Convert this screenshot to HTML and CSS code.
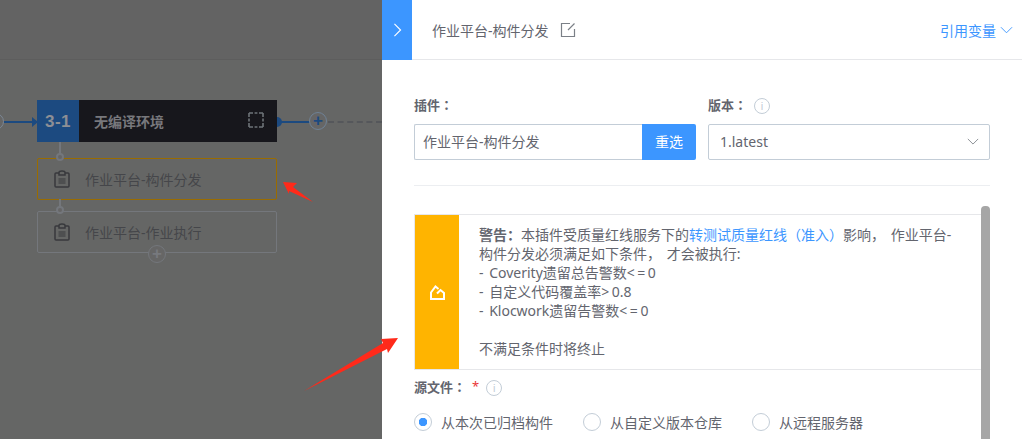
FILE: index.html
```html
<!DOCTYPE html>
<html lang="zh-CN">
<head>
    <meta charset="UTF-8">
    <title>作业平台-构件分发</title>
    <link rel="stylesheet" href="styles.css">
</head>
<body>
    <div class="page">
        <div class="canvas">
            <div class="topbar"></div>
            <div class="line line-in"></div>
            <div class="start-dot"></div>
            <div class="arrow-in"></div>
            <div class="stage">
                <div class="stage-num">3-1</div>
                <div class="stage-name">无编译环境</div>
                <svg class="stage-check" viewBox="0 0 16 16" width="16" height="16"><rect x="1" y="1" width="14" height="14" fill="none" stroke="#6e7478" stroke-width="1.6" stroke-dasharray="4 1.6 2.8 1.6 4 0"/></svg>
            </div>
            <div class="end-dot"></div>
            <div class="line line-out"></div>
            <div class="add-btn">+</div>
            <div class="line-dash"></div>
            <div class="stem stem-one"></div>
            <div class="knob knob-one"></div>
            <div class="atom atom-active">
                <svg class="atom-icon" viewBox="0 0 16 18" width="16" height="18"><use href="#clip"></use></svg>
                <span>作业平台-构件分发</span>
            </div>
            <div class="stem stem-two"></div>
            <div class="knob knob-two"></div>
            <div class="atom atom-next">
                <svg class="atom-icon" viewBox="0 0 16 18" width="16" height="18"><use href="#clip"></use></svg>
                <span>作业平台-作业执行</span>
            </div>
            <div class="add-small">+</div>
        </div>

        <div class="panel">
            <div class="panel-head">
                <div class="toggle">
                    <svg viewBox="0 0 10 16" width="9" height="14"><path d="M1.5 1 L8.5 8 L1.5 15" fill="none" stroke="#fff" stroke-width="1.3"/></svg>
                </div>
                <div class="panel-title">作业平台-构件分发</div>
                <svg class="edit-icon" viewBox="0 0 16 16" width="16" height="16"><path d="M14.5 7 V14.5 H1.5 V1.5 H10 M14.5 1.5 L8 8" fill="none" stroke="#7b8087" stroke-width="1.2"/></svg>
                <div class="var-link">引用变量
                    <svg viewBox="0 0 14 8" width="13" height="8"><path d="M1 1 L7 7 L13 1" fill="none" stroke="#3c96ff" stroke-width="1"/></svg>
                </div>
            </div>

            <div class="panel-body">
                <div class="field-row">
                    <div class="field field-plugin">
                        <div class="field-label">插件<span class="cn-mark">：</span></div>
                        <div class="plugin-input">
                            <div class="plugin-value">作业平台-构件分发</div>
                            <div class="plugin-btn">重选</div>
                        </div>
                    </div>
                    <div class="field field-version">
                        <div class="field-label">版本<span class="cn-mark">：</span><span class="info">i</span></div>
                        <div class="version-select">
                            <span>1.latest</span>
                            <svg viewBox="0 0 14 8" width="12" height="7"><path d="M1 1 L7 7 L13 1" fill="none" stroke="#7b8087" stroke-width="1"/></svg>
                        </div>
                    </div>
                </div>
                <div class="divider"></div>

                <div class="scroll-area">
                    <div class="warning">
                        <div class="warning-side">
                            <svg viewBox="0 0 15 15" width="15" height="15"><path d="M7 8.5 L10.5 5 L14 8 V14 H1 V7.5 L5.5 1.5 L8.5 4" fill="none" stroke="#fff" stroke-width="2"/></svg>
                        </div>
                        <div class="warning-text">
                            <p><b>警告<span class="cn-mark">：</span></b>本插件受质量红线服务下的<a>转测试质量红线<span class="cn-mark">（</span>准入<span class="cn-mark">）</span></a>影响， 作业平台-构件分发必须满足如下条件， 才会被执行:</p>
                            <p>- Coverity遗留总告警数<span class="op">&lt;=</span>0</p>
                            <p>- 自定义代码覆盖率<span class="op">&gt;</span>0.8</p>
                            <p>- Klocwork遗留告警数<span class="op">&lt;=</span>0</p>
                            <p class="gap">不满足条件时将终止</p>
                        </div>
                    </div>
                    <div class="field-label source-label">源文件<span class="cn-mark">：</span><span class="star">*</span><span class="info">i</span></div>
                    <div class="radio-row">
                        <label class="radio radio-on"><span class="radio-dot"></span>从本次已归档构件</label>
                        <label class="radio"><span class="radio-dot"></span>从自定义版本仓库</label>
                        <label class="radio"><span class="radio-dot"></span>从远程服务器</label>
                    </div>
                    <div class="scrollbar"></div>
                </div>
            </div>
        </div>

        <svg class="red-arrow arrow-one" viewBox="0 0 32 24" width="32" height="24"><polygon points="0,3 14,4 10,8 30,23 6,12 6,15" fill="#ff2a1a"/></svg>
        <svg class="red-arrow arrow-two" viewBox="0 0 98 56" width="98" height="56"><polygon points="95,1 78,2 80,6 1,54 84,12 85,16" fill="#ff2a1a"/></svg>
    </div>

    <svg class="defs" width="0" height="0">
        <symbol id="clip" viewBox="0 0 16 18">
            <path d="M5 3 H2 Q1 3 1 4 V16 Q1 17 2 17 H14 Q15 17 15 16 V4 Q15 3 14 3 H11 M5 5 V2.5 Q5 1 8 1 Q11 1 11 2.5 V5 Z" fill="none" stroke="#38393d" stroke-width="1.5"/>
            <path d="M4.5 9 H11.5 M4.5 11 H11.5 M4.5 13 H11.5" stroke="#38393d" stroke-width="1.2"/>
        </symbol>
    </svg>
</body>
</html>
```

FILE: styles.css
```css
* {
    box-sizing: border-box;
}
html, body {
    margin: 0;
    height: 100%;
    overflow: hidden;
}
body {
    font-family: "Noto Sans", "Noto Sans CJK SC", sans-serif;
    font-size: 14px;
    color: #63656e;
    background-color: #666;
}
.page {
    position: relative;
    display: flex;
    width: 1022px;
    height: 439px;
    overflow: hidden;
}
.defs {
    position: absolute;
}
/* colons and brackets sit in the middle of the cell in the reference */
.cn-mark {
    font-family: "Noto Sans CJK TC", sans-serif;
}

/* pipeline canvas */
.canvas {
    position: relative;
    width: 382px;
    height: 439px;
    flex-shrink: 0;
    background-color: #656665;
}
.topbar {
    height: 60px;
    background-color: #636363;
    border-bottom: 1px solid #5d5d5d;
}
.stage {
    position: absolute;
    left: 37px;
    top: 100px;
    width: 240px;
    height: 42px;
    display: flex;
    align-items: center;
    background-color: #17171c;
}
.stage-num {
    width: 42px;
    height: 42px;
    line-height: 43px;
    text-align: center;
    font-family: "Liberation Sans", sans-serif;
    font-size: 17px;
    font-weight: bold;
    letter-spacing: 0.5px;
    color: #8d8f95;
    background-color: #1c4a80;
}
.stage-name {
    margin-left: 15px;
    font-size: 14px;
    font-weight: bold;
    color: #77787c;
}
.stage-check {
    position: absolute;
    right: 13px;
    top: 12px;
}
.line {
    position: absolute;
    height: 2px;
    top: 121px;
    background-color: #1c4a80;
}
.line-in {
    left: 4px;
    width: 30px;
}
.start-dot {
    position: absolute;
    left: -13px;
    top: 113px;
    width: 17px;
    height: 17px;
    border-radius: 50%;
    border: 1px solid #7b8794;
    background-color: #666;
}
.arrow-in {
    position: absolute;
    left: 32px;
    top: 117px;
    border-left: 6px solid #1c4a80;
    border-top: 5px solid transparent;
    border-bottom: 5px solid transparent;
}
.end-dot {
    position: absolute;
    left: 277px;
    top: 117px;
    width: 5px;
    height: 10px;
    border-radius: 0 5px 5px 0;
    background-color: #1c4a80;
}
.line-out {
    left: 281px;
    width: 29px;
}
.add-btn {
    position: absolute;
    left: 309px;
    top: 112px;
    width: 18px;
    height: 18px;
    line-height: 15px;
    text-align: center;
    font-family: "Liberation Sans", sans-serif;
    font-size: 17px;
    font-weight: bold;
    color: #1c4a80;
    border: 1px solid #6f8296;
    border-radius: 50%;
    background-color: #666;
}
.line-dash {
    position: absolute;
    left: 328px;
    top: 121px;
    width: 54px;
    border-top: 2px dashed #55575b;
}
.stem {
    position: absolute;
    left: 59px;
    width: 2px;
    background-color: #74777c;
}
.stem-one {
    top: 142px;
    height: 12px;
}
.stem-two {
    top: 199px;
    height: 10px;
}
.knob {
    position: absolute;
    left: 56px;
    width: 8px;
    height: 8px;
    border: 2px solid #74777c;
    border-radius: 50%;
    background-color: #666;
    z-index: 1;
}
.knob-one {
    top: 153px;
}
.knob-two {
    top: 206px;
}
.atom {
    position: absolute;
    left: 37px;
    width: 240px;
    height: 42px;
    display: flex;
    align-items: center;
    padding-left: 16px;
    font-size: 14px;
    color: #45464a;
    border: 1px solid #74777c;
    border-radius: 2px;
}
.atom-active {
    top: 158px;
    border: 1px solid #9a6c00;
}
.atom-next {
    top: 211px;
}
.atom-icon {
    margin-right: 15px;
}
.add-small {
    position: absolute;
    left: 148px;
    top: 245px;
    width: 18px;
    height: 18px;
    line-height: 15px;
    text-align: center;
    font-family: "Liberation Sans", sans-serif;
    font-size: 17px;
    font-weight: bold;
    color: #77797e;
    border: 1px solid #74777c;
    border-radius: 50%;
    background-color: #666;
}

/* right panel */
.panel {
    flex: 1;
    background-color: #fff;
}
.panel-head {
    display: flex;
    align-items: center;
    height: 60px;
    border-bottom: 1px solid #e6e7ea;
}
.toggle {
    display: flex;
    align-items: center;
    justify-content: center;
    width: 30px;
    height: 60px;
    background-color: #3c96ff;
}
.panel-title {
    margin-left: 20px;
    font-size: 14px;
    color: #63656e;
}
.edit-icon {
    margin-left: 11px;
}
.var-link {
    display: flex;
    align-items: center;
    gap: 4px;
    margin-left: auto;
    margin-right: 9px;
    font-size: 14px;
    color: #3c96ff;
}
.panel-body {
    padding: 34px 32px 0;
}
.field-row {
    display: flex;
    gap: 12px;
}
.field-plugin {
    width: 282px;
}
.field-version {
    width: 282px;
}
.field-label {
    display: flex;
    align-items: center;
    height: 20px;
    margin-bottom: 10px;
    font-size: 13px;
    font-weight: bold;
    color: #63656e;
}
.info {
    display: inline-block;
    width: 16px;
    height: 16px;
    line-height: 14px;
    margin: 4px 0 0 7px;
    text-align: center;
    font-family: "Liberation Sans", sans-serif;
    font-size: 11px;
    font-weight: normal;
    color: #c3cdd7;
    border: 1px solid #c3cdd7;
    border-radius: 50%;
}
.plugin-input {
    display: flex;
    height: 36px;
}
.plugin-value {
    flex: 1;
    line-height: 33px;
    padding-left: 8px;
    font-size: 14px;
    border: 1px solid #c3cdd7;
    border-right: none;
    border-radius: 2px 0 0 2px;
}
.plugin-btn {
    width: 54px;
    line-height: 35px;
    text-align: center;
    font-size: 14px;
    color: #fff;
    background-color: #3c96ff;
    border-radius: 0 2px 2px 0;
}
.version-select {
    display: flex;
    align-items: center;
    justify-content: space-between;
    height: 36px;
    padding: 0 10px 2px 11px;
    font-size: 14px;
    border: 1px solid #c3cdd7;
    border-radius: 2px;
}
.divider {
    margin-top: 25px;
    height: 1px;
    background-color: #eceef1;
}
.scroll-area {
    position: relative;
    margin-top: 28px;
    width: 576px;
}
.warning {
    display: flex;
    height: 156px;
    width: 567px;
    border: 1px solid #e6e7ea;
    border-right: none;
}
.warning-side {
    display: flex;
    align-items: center;
    justify-content: center;
    width: 44px;
    flex-shrink: 0;
    background-color: #ffb400;
}
.warning-text {
    flex: 1;
    padding: 10px 28px 0 20px;
    font-size: 14px;
    line-height: 19px;
    word-spacing: 2px;
}
.warning-text p {
    margin: 0;
}
.warning-text .gap {
    margin-top: 19px;
}
.warning-text a {
    color: #3c96ff;
}
.op {
    letter-spacing: 2.5px;
}
.source-label {
    margin-top: 6px;
    margin-bottom: 0;
}
.star {
    margin-left: 6px;
    font-weight: normal;
    color: #ea3636;
}
.radio-row {
    display: flex;
    gap: 30px;
    margin-top: 16px;
}
.radio {
    display: flex;
    align-items: center;
    gap: 9px;
    font-size: 14px;
}
.radio-dot {
    width: 18px;
    height: 18px;
    border: 1px solid #c3cdd7;
    border-radius: 50%;
}
.radio-on .radio-dot {
    background: radial-gradient(circle, #3c96ff 4px, #fff 4.5px);
}
.scrollbar {
    position: absolute;
    right: 0;
    top: -8px;
    width: 9px;
    height: 300px;
    border-radius: 4px 4px 0 0;
    background-color: #a6a6a6;
}

/* annotation arrows */
.red-arrow {
    position: absolute;
}
.arrow-one {
    left: 283px;
    top: 179px;
}
.arrow-two {
    left: 303px;
    top: 337px;
}
```
